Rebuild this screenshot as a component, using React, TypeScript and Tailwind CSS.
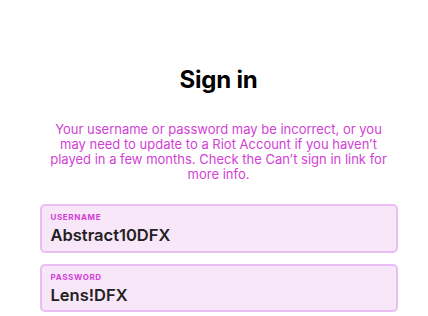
import React from "react";

export default function App() {
  return (
    <div
      className="w-[428px] h-[316px] bg-white overflow-hidden flex flex-col items-center pl-[9px]"
      style={{ fontFamily: "Inter, 'Noto Sans', sans-serif" }}
    >
      <h1 className="mt-[63px] text-[24px] leading-[34px] font-bold text-black tracking-[-0.01em]">Sign in</h1>
      <p className="mt-[25px] w-[345px] text-center text-[13px] leading-[15px] text-[#d23fd6]">
        Your username or password may be incorrect, or you may need to update to a Riot Account if you haven’t played in a few months. Check the Can’t sign in link for more info.
      </p>
      <div className="mt-[22px] w-[358px] flex flex-col gap-[11px]">
        <div className="h-[49px] rounded-[5px] border-2 border-[#ebbdf5] bg-[#f8e6f9] px-[9px] pt-[6px]">
          <div className="text-[8px] leading-[10px] font-bold tracking-[0.08em] text-[#d23fd6]">USERNAME</div>
          <div className="mt-[3px] text-[16.5px] leading-[20px] font-semibold text-[#222]">Abstract10DFX</div>
        </div>
        <div className="h-[48px] rounded-[5px] border-2 border-[#ebbdf5] bg-[#f8e6f9] px-[9px] pt-[6px]">
          <div className="text-[8px] leading-[10px] font-bold tracking-[0.08em] text-[#d23fd6]">PASSWORD</div>
          <div className="mt-[3px] text-[16.5px] leading-[20px] font-semibold text-[#222]">Lens!DFX</div>
        </div>
      </div>
    </div>
  );
}
